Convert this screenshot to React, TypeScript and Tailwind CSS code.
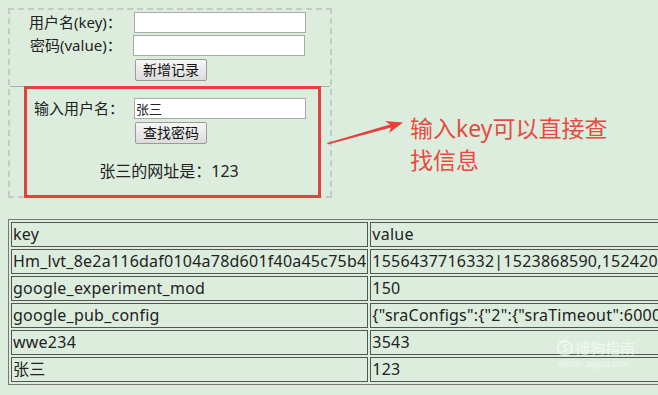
const rows: [string, string][] = [
  ["key", "value"],
  ["Hm_lvt_8e2a116daf0104a78d601f40a45c75b4", "1556437716332|1523868590,1524208858,1524730297,1525420127"],
  ["google_experiment_mod", "150"],
  ["google_pub_config", '{"sraConfigs":{"2":{"sraTimeout":60000,"sraTimeoutMs":10}}}'],
  ["wwe234", "3543"],
  ["张三", "123"],
];

const font = "font-['Noto_Sans','Noto_Sans_CJK_SC',sans-serif]";

function Btn({ children }: { children: React.ReactNode }) {
  return (
    <button className="h-[22px] px-[7px] text-[14px] leading-none text-[#111] border border-[#9a9a9a] rounded-[2px] bg-gradient-to-b from-[#f6f6f6] to-[#dcdcdc]">
      {children}
    </button>
  );
}

export default function App() {
  return (
    <div className={`relative w-[658px] h-[395px] overflow-hidden bg-[#dcedde] text-[#222] ${font}`}>
      <div className="pt-[8px] pl-[8px]">
        {/* form box */}
        <div className="w-[324px] h-[189px] border-2 border-dashed border-[#c4cbc4] border-b-0 relative">
          <div className="h-[76px] pt-[1px]">
            <div className="flex items-center h-[23px]">
              <span className="w-[112px] shrink-0 whitespace-nowrap pl-[19px] text-[15px]">用户名(key)：</span>
              <input className="ml-[12px] w-[172px] h-[21px] bg-white border border-[#a9a9a9]" />
            </div>
            <div className="flex items-center h-[23px]">
              <span className="w-[112px] shrink-0 whitespace-nowrap pl-[20px] text-[15px]">密码(value)：</span>
              <input className="ml-[11px] w-[172px] h-[21px] bg-white border border-[#a9a9a9]" />
            </div>
            <div className="pl-[125px]">
              <Btn>新增记录</Btn>
            </div>
          </div>
          <div className="h-px bg-[#a9b0a9]" />
          <div className="pt-[10px]">
            <div className="flex items-center h-[22px]">
              <span className="w-[112px] shrink-0 whitespace-nowrap pl-[24px] text-[15px]">输入用户名：</span>
              <input
                defaultValue="张三"
                className="ml-[12px] w-[172px] h-[21px] px-[1px] text-[13px] bg-white border border-[#a9a9a9]"
              />
            </div>
            <div className="pl-[125px] pt-[1px]">
              <Btn>查找密码</Btn>
            </div>
            <p className="pt-[15px] text-center text-[16px] pr-[2px]">张三的网址是：123</p>
          </div>
          <div className="absolute left-[14px] top-[76px] w-[297px] h-[112px] border-[3px] border-[#e4403c]" />
        </div>
        <div className="w-[324px] border-b-2 border-dashed border-[#c4cbc4] h-0 -mt-[1px]" />

        {/* data table */}
        <table className="mt-[21px] border border-[#777] border-separate border-spacing-[2px] text-[16px] tracking-[0.23px] whitespace-nowrap">
          <tbody>
            {rows.map(([k, v], i) => (
              <tr key={i} className="h-[25px]">
                <td className="w-[356px] border border-[#555] px-[1px] leading-[23px]">{k}</td>
                <td className="border border-[#555] px-[1px] leading-[23px]">{v}</td>
              </tr>
            ))}
          </tbody>
        </table>
      </div>

      {/* annotation */}
      <svg className="absolute left-0 top-0" width="658" height="395">
        <polygon points="327,143 390,124.5 385,121 403,122.5 389,133 391,127.5 328,144.5" fill="#e8403a" />
      </svg>
      <div className="absolute left-[410px] top-[112px] w-[240px] text-[23px] leading-[32px] text-[#e84a3f]">
        输入key可以直接查<br />找信息
      </div>

      {/* watermark */}
      <div className="absolute left-[557px] top-[340px] text-white/55 text-[15px] leading-none">
        <div className="flex items-center gap-[2px]">
          <span className="inline-flex items-center justify-center w-[16px] h-[16px] rounded-full border-2 border-white/55 text-[10px] font-bold">S</span>
          <span>搜狗指南</span>
        </div>
        <div className="text-[8px] mt-[4px] tracking-wide">zhinan.sogou.com</div>
      </div>
    </div>
  );
}
